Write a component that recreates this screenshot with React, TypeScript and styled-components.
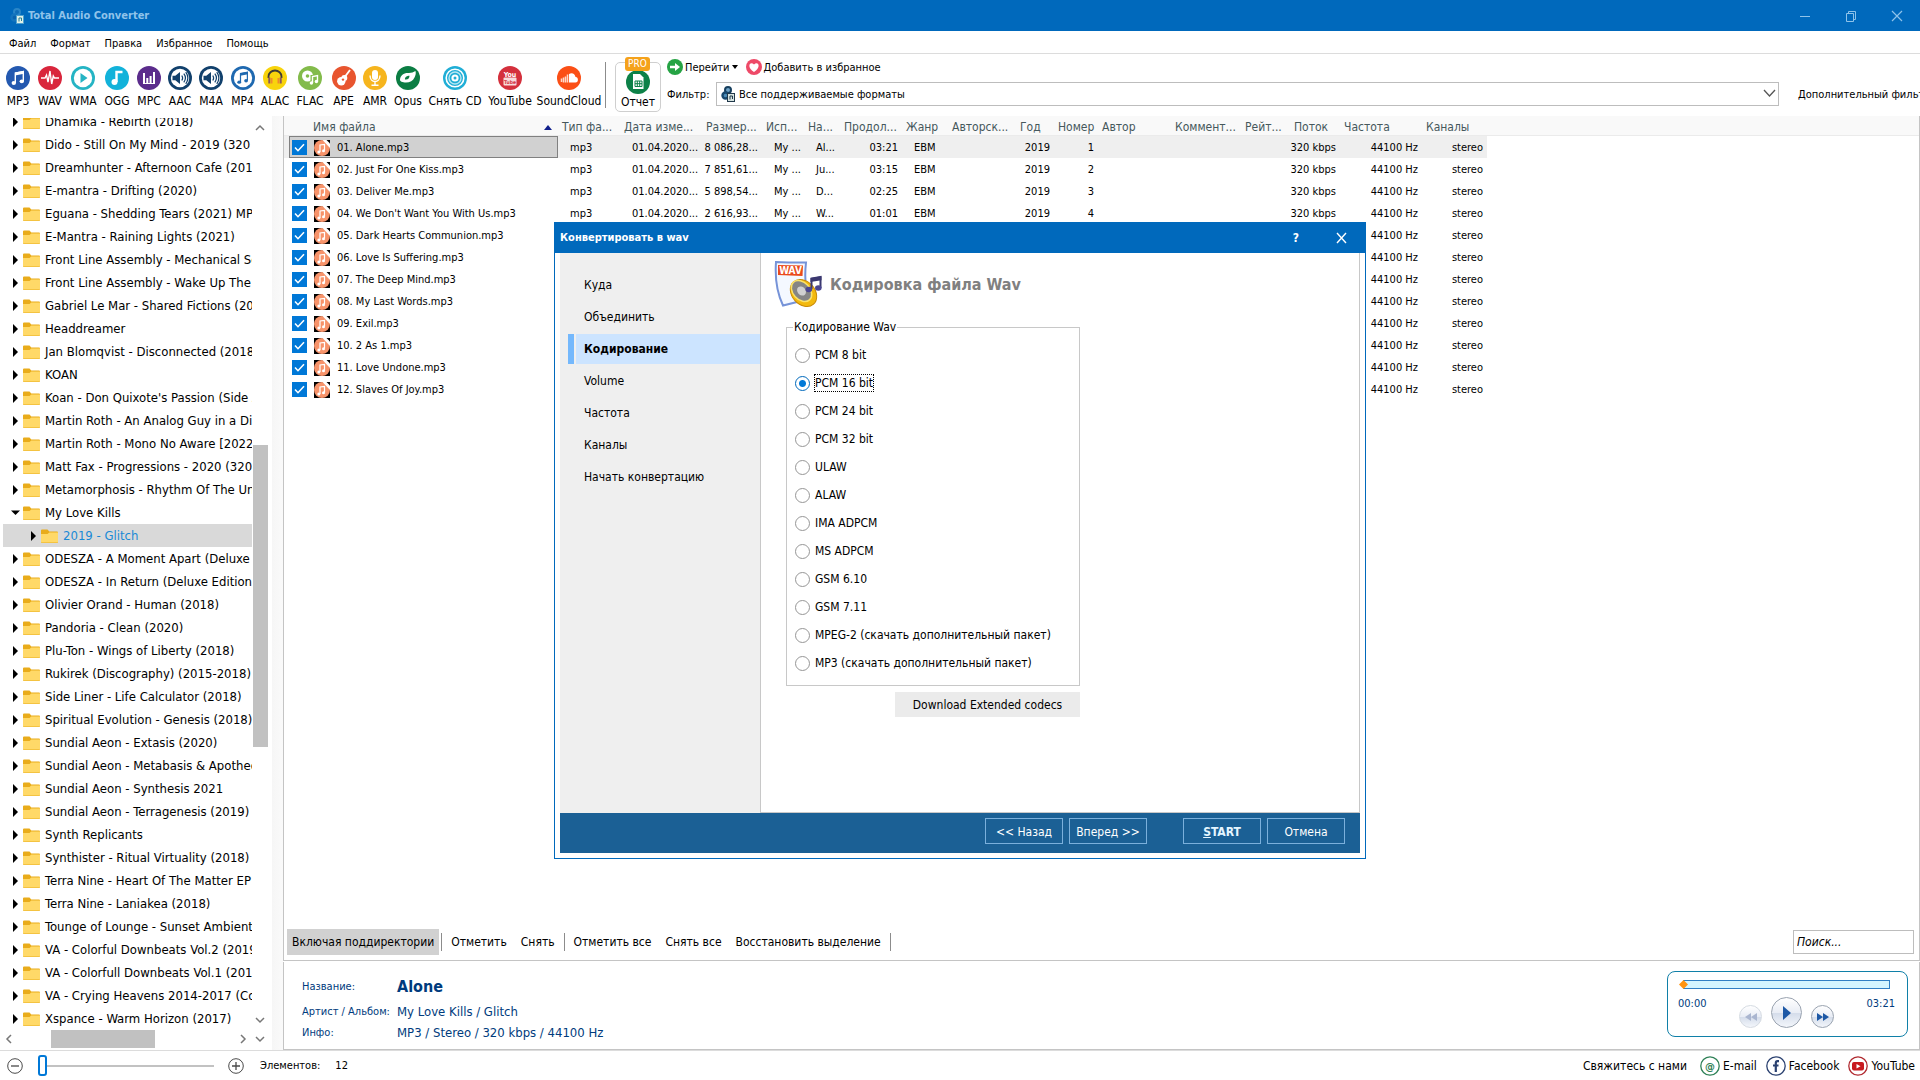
import React from "react";
import styled, { createGlobalStyle } from "styled-components";

const GlobalStyle = createGlobalStyle`
  * { box-sizing: border-box; }
  body {
    margin: 0;
    background: #fff;
    color: #000;
    font-family: "DejaVu Sans Condensed", "DejaVu Sans", "Noto Sans", sans-serif;
    font-size: 12px;
  }
  button, input, select { font: inherit; color: inherit; }
  button {
    margin: 0;
    padding: 0;
    border: 0;
    background: none;
    white-space: nowrap;
    cursor: pointer;
  }
`;

/* ---------- window frame ---------- */

const Window = styled.div`
  display: flex;
  flex-direction: column;
  height: 100vh;
  overflow: hidden;
`;

const TitleBar = styled.header`
  display: flex;
  align-items: center;
  flex: none;
  height: 31px;
  padding: 0 10px;
  gap: 3px;
  background: #0069bc;
  color: #8fc3ea;
`;

const AppTitle = styled.h1`
  flex: 1;
  margin: 0;
  font-size: 11px;
  font-weight: bold;
`;

const CaptionButtons = styled.div`
  display: flex;
  gap: 32px;
  padding-right: 6px;
`;

const CaptionButton = styled.button`
  display: flex;
  width: 14px;
  height: 14px;
`;

const MenuBar = styled.nav`
  display: flex;
  align-items: center;
  flex: none;
  height: 23px;
  padding: 2px 0 0 9px;
  gap: 14px;
  border-bottom: 1px solid #dcdcdc;
`;

const MenuItem = styled.button`
  font-size: 11px;
`;

/* ---------- toolbar ---------- */

const Toolbar = styled.div`
  display: flex;
  flex: none;
  height: 62px;
  overflow: hidden;
`;

const Formats = styled.div`
  display: flex;
  align-items: flex-start;
  padding: 12px 2px 0 1px;
`;

const FormatButton = styled.button<{ $width: number }>`
  display: flex;
  flex-direction: column;
  align-items: center;
  flex: none;
  width: ${(p) => p.$width}px;
  gap: 4px;
  font-size: 12px;
  line-height: 14px;
`;

const Divider = styled.span<{ $height: number }>`
  flex: none;
  width: 1px;
  height: ${(p) => p.$height}px;
  background: #8c8c8c;
`;

const ToolbarDivider = styled(Divider)`
  margin: 8px 9px 0 0;
`;

const ReportButton = styled.button`
  position: relative;
  display: flex;
  flex-direction: column;
  align-items: center;
  flex: none;
  width: 46px;
  height: 50px;
  margin-top: 8px;
  padding-top: 7px;
  gap: 1px;
  border: 1px solid #cfcfcf;
  border-radius: 5px;
  font-size: 12px;
  line-height: 14px;
`;

const ProBadge = styled.span`
  position: absolute;
  top: -6px;
  left: 9px;
  padding: 0 3px;
  border-radius: 3px;
  background: #f5a21b;
  color: #fff;
  font-size: 10px;
  line-height: 14px;
`;

const ToolbarRight = styled.div`
  display: flex;
  flex-direction: column;
  flex: 1;
  min-width: 0;
  padding: 5px 0 0 6px;
  gap: 7px;
  font-size: 11px;
`;

const Actions = styled.div`
  display: flex;
  height: 16px;
  gap: 8px;
`;

const ActionButton = styled.button`
  display: flex;
  align-items: center;
  gap: 2px;
  font-size: 11px;
`;

const FilterRow = styled.div`
  display: flex;
  align-items: center;
`;

const FilterLabel = styled.label`
  width: 49px;
  flex: none;
`;

const FilterBox = styled.div`
  position: relative;
  flex: 1;
`;

const FilterSelect = styled.select`
  display: block;
  width: 100%;
  height: 24px;
  padding: 0 22px;
  border: 1px solid #bdbdbd;
  border-radius: 0;
  background: #fff;
  appearance: none;
`;

const FilterIcon = styled.span`
  position: absolute;
  top: 4px;
  left: 5px;
  display: flex;
  pointer-events: none;
`;

const FilterArrow = styled(FilterIcon)`
  top: 7px;
  left: auto;
  right: 3px;
`;

const ExtraFilter = styled.button`
  flex: none;
  width: 141px;
  padding-left: 19px;
  overflow: hidden;
  text-align: left;
  font-size: 11px;
`;

/* ---------- folder tree ---------- */

const Body = styled.div`
  display: flex;
  flex: 1;
  min-height: 0;
`;

const Sidebar = styled.aside`
  display: flex;
  flex-direction: column;
  flex: none;
  width: 272px;
  padding: 2px 4px 2px 3px;
`;

const TreeArea = styled.div`
  display: flex;
  flex: 1;
  min-height: 0;
`;

const Tree = styled.ul`
  display: flex;
  flex-direction: column;
  justify-content: flex-end;
  flex: 1;
  min-width: 0;
  margin: 0;
  padding: 0;
  overflow: hidden;
  list-style: none;
`;

const Folder = styled.li<{ $depth: number; $selected: boolean }>`
  display: flex;
  align-items: center;
  flex: none;
  height: 23px;
  padding-left: ${(p) => 8 + p.$depth * 18}px;
  gap: 3px;
  overflow: hidden;
  background: ${(p) => (p.$selected ? "#d9d9d9" : "transparent")};
  color: ${(p) => (p.$selected ? "#1a8ad6" : "#000")};
  font-size: 13px;
  line-height: 16px;
  white-space: nowrap;
  svg { flex: none; }
`;

const FolderName = styled.span`
  padding-left: 2px;
`;

const VScroll = styled.div`
  display: flex;
  flex-direction: column;
  align-items: center;
  flex: none;
  width: 16px;
  padding: 4px 0;
`;

const Spacer = styled.span<{ $grow: number }>`
  flex: ${(p) => p.$grow} 1 0;
`;

const VThumb = styled.span`
  flex: 302 1 0;
  width: 15px;
  background: #c1c1c1;
`;

const HScroll = styled.div`
  display: flex;
  align-items: center;
  flex: none;
  height: 18px;
  padding-right: 2px;
`;

const HTrack = styled.div`
  display: flex;
  flex: 1;
  height: 18px;
  padding: 0 82px 0 36px;
`;

const HThumb = styled.span`
  flex: 1;
  background: #c1c1c1;
`;

const HGap = styled.span`
  width: 5px;
`;

const Splitter = styled.div`
  flex: none;
  width: 11px;
  background: linear-gradient(90deg, #f6f6f6, #fafafa);
`;

/* ---------- file list ---------- */

const Main = styled.main`
  display: flex;
  flex-direction: column;
  flex: 1;
  min-width: 0;
`;

const ListPanel = styled.section`
  display: flex;
  flex-direction: column;
  flex: 1;
  min-height: 0;
  border: 1px solid #c4c4c4;
  border-top: 0;
`;

const ListScroller = styled.div`
  flex: 1;
  min-height: 0;
  overflow: hidden;
  background: linear-gradient(#f9f9f9 19px, #ebebeb 19px, #ebebeb 20px, transparent 20px);
`;

const FileTable = styled.table`
  width: 1203px;
  border-collapse: collapse;
  table-layout: fixed;
  font-size: 11px;
  line-height: 14px;
  white-space: nowrap;
`;

const HeadCell = styled.th`
  height: 20px;
  padding: 2px 0 0 4px;
  color: #46585c;
  font-size: 12px;
  font-weight: normal;
  text-align: left;
`;

const NameHead = styled(HeadCell)`
  padding-left: 29px;
`;

const SortHead = styled.div`
  display: flex;
  align-items: center;
  justify-content: space-between;
  padding-right: 6px;
`;

const FileRow = styled.tr<{ $active: boolean }>`
  height: 22px;
  background: ${(p) => (p.$active ? "#efefef" : "transparent")};
`;

const Cell = styled.td<{ $right?: boolean }>`
  padding: ${(p) => (p.$right ? "1px 4px 0 0" : "1px 0 0 12px")};
  text-align: ${(p) => (p.$right ? "right" : "left")};
`;

const NameCell = styled.td`
  padding: 0 0 0 5px;
`;

const NameBox = styled.label<{ $active: boolean }>`
  display: flex;
  align-items: center;
  height: 22px;
  padding: 1px 0 0 2px;
  gap: 7px;
  border: 1px solid ${(p) => (p.$active ? "#808080" : "transparent")};
  background: ${(p) => (p.$active ? "#d1d1d1" : "transparent")};
`;

const Tick = styled.input`
  flex: none;
  width: 15px;
  height: 15px;
  margin: 0;
  border: 1px solid #0078d7;
  background: #0078d7;
  appearance: none;
  &:checked {
    background: #0078d7 url("data:image/svg+xml,%3Csvg xmlns='http://www.w3.org/2000/svg' viewBox='0 0 13 13'%3E%3Cpath d='M2 6.5l3 3.2 6-6.4' fill='none' stroke='white' stroke-width='1.6'/%3E%3C/svg%3E") center / 13px 13px no-repeat;
  }
`;

const SelectBar = styled.div`
  display: flex;
  align-items: center;
  flex: none;
  height: 38px;
  padding: 1px 5px 0 3px;
`;

const SelectButton = styled.button<{ $active?: boolean }>`
  height: 26px;
  padding: 1px ${(p) => (p.$active ? 5 : 7)}px 0;
  background: ${(p) => (p.$active ? "#d1d1d1" : "transparent")};
`;

const BarDivider = styled(Divider)`
  margin: 0 2px;
`;

const Search = styled.input`
  width: 121px;
  height: 24px;
  margin-left: auto;
  padding: 0 3px;
  border: 1px solid #bdbdbd;
  font-style: italic;
  &::placeholder { color: #000; opacity: 1; }
`;

/* ---------- track info and player ---------- */

const InfoPanel = styled.section`
  display: flex;
  justify-content: space-between;
  flex: none;
  height: 88px;
  margin-top: 1px;
  padding: 9px 11px 0 18px;
  border: 1px solid #c4c4c4;
  border-top: 0;
  color: #003b7d;
`;

const TrackInfo = styled.dl`
  display: grid;
  grid-template-columns: 95px auto;
  grid-template-rows: 30px 20px 22px;
  align-items: center;
  margin: 0;
  dt { font-size: 11px; white-space: nowrap; }
  dd { margin: 0; font-size: 13px; }
`;

const TrackTitle = styled.dd`
  && { font-size: 16px; font-weight: bold; }
`;

const Player = styled.div`
  display: flex;
  flex-direction: column;
  width: 241px;
  height: 66px;
  padding: 8px 12px 0 10px;
  border: 1px solid #1080a8;
  border-radius: 8px;
`;

const Seek = styled.input`
  height: 9px;
  margin: 0 5px;
  border: 1px solid #2f7fc4;
  background: #d3f5ff;
  appearance: none;
  &::-webkit-slider-thumb {
    width: 9px;
    height: 9px;
    margin-left: -5px;
    background: #ff9410;
    appearance: none;
    clip-path: polygon(50% 0, 100% 50%, 50% 100%, 0 50%);
  }
`;

const PlayerRow = styled.div`
  display: flex;
  justify-content: space-between;
  padding-top: 8px;
  font-size: 11px;
`;

const PlayerButtons = styled.div`
  display: flex;
  align-items: flex-end;
  gap: 9px;
`;

const RoundButton = styled.button<{ $size: number; $dim?: boolean }>`
  display: flex;
  align-items: center;
  justify-content: center;
  width: ${(p) => p.$size}px;
  height: ${(p) => p.$size}px;
  border: 1px solid ${(p) => (p.$dim ? "#d5dbe2" : "#9aa3b0")};
  border-radius: 50%;
  background: linear-gradient(#fff, #e9edf5 50%, #d4dcea 52%, #f3f6fb);
  color: ${(p) => (p.$dim ? "#aab6d0" : "#1d58a5")};
`;

/* ---------- status bar ---------- */

const StatusBar = styled.footer`
  display: flex;
  align-items: center;
  flex: none;
  height: 30px;
  padding: 0 5px 0 7px;
  border-top: 1px solid #dcdcdc;
`;

const IconButton = styled.button`
  display: flex;
`;

const Zoom = styled.input`
  width: 176px;
  height: 22px;
  margin: 0 14px 0 15px;
  background: linear-gradient(#c2c2c2, #c2c2c2) center / 100% 2px no-repeat;
  appearance: none;
  &::-webkit-slider-thumb {
    width: 9px;
    height: 21px;
    border: 2px solid #0078d7;
    border-radius: 3px;
    background: #fff;
    appearance: none;
  }
`;

const Count = styled.span`
  display: flex;
  gap: 15px;
  padding-left: 16px;
  font-size: 11px;
`;

const Contacts = styled.div`
  display: flex;
  align-items: center;
  margin-left: auto;
  gap: 9px;
`;

const ContactLabel = styled.span`
  padding-right: 4px;
`;

const ContactLink = styled.a`
  display: flex;
  align-items: center;
  gap: 3px;
  color: #000;
  text-decoration: none;
`;

/* ---------- convert dialog ---------- */

const Dialog = styled.section`
  position: absolute;
  top: 222px;
  left: 554px;
  display: flex;
  flex-direction: column;
  width: 812px;
  height: 637px;
  padding: 0 5px 5px;
  border: 1px solid #0069bc;
  border-top: 0;
  background: #fff;
`;

const DialogTitle = styled.header`
  display: flex;
  align-items: center;
  flex: none;
  height: 31px;
  margin: 0 -5px;
  padding: 0 16px 0 5px;
  background: #0069bc;
  color: #fff;
  font-weight: bold;
`;

const DialogName = styled.h2`
  flex: 1;
  margin: 0;
  font-size: 11px;
`;

const DialogCaption = styled.div`
  display: flex;
  align-items: center;
  gap: 36px;
`;

const DialogBody = styled.div`
  display: flex;
  flex: 1;
  min-height: 0;
`;

const Steps = styled.nav`
  display: flex;
  flex-direction: column;
  flex: none;
  width: 200px;
  padding: 17px 0 0 8px;
  gap: 2px;
  background: #efefef;
`;

const Step = styled.button<{ $current: boolean }>`
  height: 30px;
  padding-left: 10px;
  border-left: 6px solid ${(p) => (p.$current ? "#74b8fc" : "transparent")};
  background: ${(p) => (p.$current ? "linear-gradient(90deg, #efefef 2px, #cce4ff 2px)" : "none")};
  font-weight: ${(p) => (p.$current ? "bold" : "normal")};
  text-align: left;
`;

const StepPage = styled.div`
  display: flex;
  flex-direction: column;
  align-items: flex-start;
  flex: 1;
  padding: 7px 0 0 13px;
  border: 1px solid #c8c8c8;
  border-top: 0;
`;

const PageHead = styled.div`
  display: flex;
  align-items: center;
  gap: 7px;
  h3 {
    margin: 0;
    color: #808080;
    font-size: 16px;
    font-weight: bold;
  }
`;

const PageBody = styled.div`
  display: flex;
  flex-direction: column;
  align-items: flex-end;
  padding-left: 12px;
`;

const Codecs = styled.fieldset`
  width: 294px;
  margin: 10px 0 6px;
  padding: 5px 8px 8px;
  border: 1px solid #c8c8c8;
  legend {
    margin-left: -2px;
    padding: 0 1px;
    line-height: 18px;
  }
`;

const CodecRow = styled.label`
  display: flex;
  align-items: center;
  height: 28px;
  gap: 4px;
  white-space: nowrap;
`;

const Radio = styled.input`
  flex: none;
  width: 15px;
  height: 15px;
  margin: 0;
  border: 1px solid #969696;
  border-radius: 50%;
  background: #fff;
  appearance: none;
  &:checked {
    border-color: #0069bc;
    background: radial-gradient(#0078d7 3px, #fff 4px);
  }
`;

const CodecName = styled.span<{ $focused: boolean }>`
  border: 1px dotted ${(p) => (p.$focused ? "#000" : "transparent")};
  line-height: 16px;
`;

const DownloadButton = styled.button`
  width: 185px;
  height: 25px;
  background: #ebebeb;
`;

const DialogFooter = styled.footer`
  display: flex;
  align-items: center;
  justify-content: flex-end;
  flex: none;
  height: 40px;
  padding: 0 15px 4px 0;
  gap: 6px;
  background: #1b6095;
`;

const FooterButton = styled.button<{ $primary?: boolean }>`
  width: 78px;
  height: 26px;
  margin-left: ${(p) => (p.$primary ? 30 : 0)}px;
  padding-top: 2px;
  border: 1px solid #7bb0dc;
  color: ${(p) => (p.$primary ? "#e4f5ff" : "#fff")};
  font-weight: ${(p) => (p.$primary ? "bold" : "normal")};
`;

/* ---------- icons ---------- */

function Disc({ color, children, ring }: { color: string; children: React.ReactNode; ring?: boolean }) {
  return (
    <svg width="24" height="24" viewBox="0 0 24 24" fill="none" aria-hidden="true">
      <circle cx="12" cy="12" r="12" fill={color} />
      {ring && <circle cx="12" cy="12" r="9.2" fill="#fff" />}
      {children}
    </svg>
  );
}

const Notes = ({ fill }: { fill: string }) => (
  <g fill={fill}>
    <path d="M9.3 17V7l8-1.500v9.500" fill="none" stroke={fill} strokeWidth="1.400" />
    <path d="M9 6.500l9-1.700v3L9 9.500z" />
    <ellipse cx="7.800" cy="17" rx="2.200" ry="1.900" />
    <ellipse cx="15.800" cy="15.300" rx="2.200" ry="1.900" />
  </g>
);

const Speaker = () => (
  <Disc color="#11406c" ring>
    <path d="M4.500 9.800h2.800L12 6v12l-4.700-3.800H4.500z" fill="#11406c" />
    <path d="M13.800 9.500c1 1.500 1 3.500 0 5M15.800 7.700c2 2.600 2 6 0 8.600M17.800 6.200c2.500 3.500 2.500 8 0 11.600" stroke="#11406c" strokeWidth="1.200" />
  </Disc>
);

const formats: { name: string; width: number; icon: React.ReactNode }[] = [
  { name: "MP3", width: 34, icon: <Disc color="#2459b0"><Notes fill="#fff" /></Disc> },
  { name: "WAV", width: 30, icon: <Disc color="#d9263c"><path d="M3 12h4l1.500-3 1.500 7L12 5l1.700 13 1.600-8 1.200 2H21" stroke="#fff" strokeWidth="1.400" /></Disc> },
  { name: "WMA", width: 36, icon: <Disc color="#25b4c4" ring><path d="M9.500 7v10l7-5z" fill="#25b4c4" /></Disc> },
  { name: "OGG", width: 32, icon: <Disc color="#12b2da"><path d="M11.500 16V6h6" stroke="#fff" strokeWidth="2.400" /><circle cx="9.500" cy="16" r="3" fill="#fff" /></Disc> },
  { name: "MPC", width: 32, icon: <Disc color="#5b2c8c"><path d="M7 18V7M10.300 18v-6M13.600 18v-8M17 18V6" stroke="#fff" strokeWidth="2" /><path d="M6 17.500h12" stroke="#fff" /></Disc> },
  { name: "AAC", width: 30, icon: <Speaker /> },
  { name: "M4A", width: 32, icon: <Speaker /> },
  { name: "MP4", width: 31, icon: <Disc color="#1f69b0" ring><g transform="translate(1.500 1.600) scale(.86)"><Notes fill="#1f69b0" /></g></Disc> },
  { name: "ALAC", width: 34, icon: <Disc color="#f8d40c"><path d="M5.500 12V10.500a6.500 6 0 0 1 13 0V12" stroke="#3d3a36" strokeWidth="1.800" /><path d="M6.300 11.500v6M17.700 11.500v6" stroke="#8a5a60" strokeWidth="2" /><path d="M8.600 12v5.500M15.400 12v5.500" stroke="#ef8a2c" strokeWidth="1.800" /></Disc> },
  { name: "FLAC", width: 36, icon: <Disc color="#83bb4b"><circle cx="9.500" cy="10" r="5.500" fill="#fff" /><circle cx="9.500" cy="10" r="1.800" fill="#83bb4b" /><path d="M12.500 9h8v11h-8z" fill="#83bb4b" /><path d="M14.500 17v-6.500l5-1v6" stroke="#fff" strokeWidth="1.400" /><circle cx="13.400" cy="17" r="1.700" fill="#fff" /><circle cx="18.400" cy="15.500" r="1.700" fill="#fff" /></Disc> },
  { name: "APE", width: 31, icon: <Disc color="#e8552f"><path d="M18 4l-6 8" stroke="#fff" strokeWidth="1.800" /><circle cx="12.300" cy="12" r="3" fill="#fff" /><circle cx="9.300" cy="15.300" r="4.200" fill="#fff" /><circle cx="11" cy="13.600" r="1.200" fill="#e8552f" /></Disc> },
  { name: "AMR", width: 32, icon: <Disc color="#f6b51e"><rect x="9" y="4" width="6" height="10" rx="3" fill="#fff" /><path d="M7 9.500c0 8 10 8 10 0M12 16v3M8.500 19.200h7" stroke="#fff" strokeWidth="1.400" /></Disc> },
  { name: "Opus", width: 34, icon: <Disc color="#0b7d43"><path d="M4 13.500C4.500 9 8 6.500 13 7c2.500 0 4.500-.800 6.500-2 .800 3-.300 5-1 6.500-1.500 3.500-4.500 5-8.500 5-3.500 0-6.300-1-6-3z" fill="#fff" /><path d="M9 13.500c-.500-2.500 2-3.800 4.500-3.800 0 2.500-1.500 4.300-4.500 3.800z" fill="#0b7d43" /></Disc> },
  { name: "Снять CD", width: 60, icon: <Disc color="#20aed6"><circle cx="12" cy="12" r="8.800" stroke="#fff" strokeWidth="1.600" /><circle cx="12" cy="12" r="6" stroke="#b6e6f3" strokeWidth="1.400" /><circle cx="12" cy="12" r="3.600" fill="#fff" /><circle cx="12" cy="12" r="1.500" fill="#20aed6" /></Disc> },
  { name: "YouTube", width: 50, icon: <Disc color="#d4303c"><text x="12" y="10.500" textAnchor="middle" fontSize="7" fontWeight="bold" fill="#fff">You</text><rect x="5.500" y="11.500" width="13" height="8" rx="1" fill="#f6dcdc" /><text x="12" y="17.800" textAnchor="middle" fontSize="5" fontWeight="bold" fill="#d4303c">Tube</text></Disc> },
  { name: "SoundCloud", width: 68, icon: <Disc color="#fb4f16"><path d="M12 16.500V8c3-2 6-.300 6.500 3 3-.200 3.500 5.500 0 5.500z" fill="#fff" /><path d="M10.500 16.500V8.500M8.500 16.500v-6M6.500 16.500v-5M4.500 16v-3.500" stroke="#ffd9ca" strokeWidth="1.500" /></Disc> },
];

const AppIcon = ({ light }: { light?: boolean }) => (
  <svg width="15" height="16" viewBox="0 0 15 16" fill="none" aria-hidden="true">
    <circle cx="7" cy="4" r="3" fill={light ? "#0f6db8" : "#6fa3c8"} stroke={light ? "#2a86c8" : "#173f5e"} strokeWidth="2" />
    <circle cx="4.500" cy="9.500" r="3" fill={light ? "#0a62ad" : "#4c8cb8"} stroke={light ? "#1474bd" : "#17486e"} strokeWidth="2.400" />
    <rect x="6.500" y="7.500" width="7" height="8" fill={light ? "#dff0e8" : "#d6e3e0"} stroke={light ? "#4fa2cf" : "#20384a"} />
    <path d="M9 13.500v-3.500h2.500v3" stroke={light ? "#2a7f90" : "#20384a"} />
  </svg>
);

const FolderIcon = () => (
  <svg width="17" height="16" viewBox="0 0 17 16" aria-hidden="true">
    <path d="M0 2.500a1 1 0 0 1 1-1h5.500l1.800 2H16a1 1 0 0 1 1 1V14a1 1 0 0 1-1 1H1a1 1 0 0 1-1-1z" fill="#e9ac1b" />
    <path d="M0 6h6.500l1.800-1.500H17v9.300a.9.900 0 0 1-1 .800H1a.9.900 0 0 1-1-.800z" fill="#ffd968" />
  </svg>
);

const Expander = ({ open }: { open: boolean }) => (
  <svg width="9" height="12" viewBox="0 0 9 12" aria-hidden="true">
    <path d={open ? "M0 3.500h9L4.500 8z" : "M2 1v10l5-5z"} fill="#000" />
  </svg>
);

const arrows = { up: "M2 8l4-4 4 4", down: "M2 4l4 4 4-4", left: "M8 2L4 6l4 4", right: "M4 2l4 4-4 4" };

const Arrow = ({ dir }: { dir: keyof typeof arrows }) => (
  <svg width="12" height="12" viewBox="0 0 12 12" fill="none" aria-hidden="true">
    <path d={arrows[dir]} stroke="#777" strokeWidth="1.500" />
  </svg>
);

const FileIcon = () => (
  <svg width="16" height="16" viewBox="0 0 16 16" fill="none" aria-hidden="true">
    <path d="M0 0h16v16H0z" fill="#000" />
    <circle cx="8" cy="8" r="8" fill="#f7936a" />
    <path d="M8.500 0h4L16 3.500V8z" fill="#fff" />
    <path d="M6 12V5l4.500-.5v6" stroke="#fff" strokeWidth="1.200" />
    <circle cx="4.800" cy="12" r="1.500" fill="#fff" />
    <circle cx="9.500" cy="10.800" r="1.500" fill="#fff" />
  </svg>
);

const RoundSign = ({ plus }: { plus?: boolean }) => (
  <svg width="16" height="16" viewBox="0 0 16 16" fill="none" stroke="#4a4a4a" aria-hidden="true">
    <circle cx="8" cy="8" r="7.300" />
    <path d={plus ? "M4 8h8M8 4v8" : "M4 8h8"} strokeWidth="1.300" />
  </svg>
);

const WavIcon = () => (
  <svg width="49" height="48" viewBox="0 0 49 48" aria-hidden="true">
    <path d="M2 2C12 2.500 22 2.500 32 2.500 30.500 16 31 28 35 39L9 45.500C3 33 1 16 2 2z" fill="#f4f8ff" stroke="#7693d8" strokeWidth="2" />
    <path d="M4 5l25 .5-.5 10.500L4 15z" fill="#ea4a1c" />
    <text x="16.500" y="14" textAnchor="middle" fontSize="10" fontWeight="bold" fill="#fff">WAV</text>
    <ellipse cx="29.500" cy="33" rx="11.500" ry="15" transform="rotate(-42 29.500 33)" fill="#f3b90e" stroke="#c98a06" />
    <ellipse cx="27.500" cy="31" rx="8.500" ry="12" transform="rotate(-42 27.500 31)" fill="#858585" stroke="#fbe36a" strokeWidth="1.500" />
    <ellipse cx="27.500" cy="31" rx="4" ry="5" transform="rotate(-42 27.500 31)" fill="#d0d0d0" />
    <path d="M37.500 29V18.500l9-1.500v11" fill="none" stroke="#3b3870" strokeWidth="2" />
    <path d="M36.500 18l11-1.700v4l-11 1.700z" fill="#3b3870" />
    <ellipse cx="34.800" cy="29.500" rx="3.300" ry="2.700" fill="#4a4590" />
    <ellipse cx="44.300" cy="28" rx="3.300" ry="2.700" fill="#4a4590" />
  </svg>
);

const Skip = ({ back }: { back?: boolean }) => (
  <svg width="12" height="8" viewBox="0 0 12 8" fill="currentColor" aria-hidden="true">
    <path d={back ? "M6 0v8L0 4zM12 0v8L6 4z" : "M0 0v8l6-4zM6 0v8l6-4z"} />
  </svg>
);

/* ---------- data ---------- */

const folders = [
  "Dhamika - Rebirth (2018)",
  "Dido - Still On My Mind - 2019 (320 kbps)",
  "Dreamhunter - Afternoon Cafe (2017)",
  "E-mantra - Drifting (2020)",
  "Eguana - Shedding Tears (2021) MP3",
  "E-Mantra - Raining Lights (2021)",
  "Front Line Assembly - Mechanical Soul",
  "Front Line Assembly - Wake Up The Coma",
  "Gabriel Le Mar - Shared Fictions (2018)",
  "Headdreamer",
  "Jan Blomqvist - Disconnected (2018)",
  "KOAN",
  "Koan - Don Quixote's Passion (Side A)",
  "Martin Roth - An Analog Guy in a Digital",
  "Martin Roth - Mono No Aware [2022]",
  "Matt Fax - Progressions - 2020 (320)",
  "Metamorphosis - Rhythm Of The Universe",
  "My Love Kills",
  "2019 - Glitch",
  "ODESZA - A Moment Apart (Deluxe Edition)",
  "ODESZA - In Return (Deluxe Edition)",
  "Olivier Orand - Human (2018)",
  "Pandoria - Clean (2020)",
  "Plu-Ton - Wings of Liberty (2018)",
  "Rukirek (Discography) (2015-2018)",
  "Side Liner - Life Calculator (2018)",
  "Spiritual Evolution - Genesis (2018)",
  "Sundial Aeon - Extasis (2020)",
  "Sundial Aeon - Metabasis & Apotheosis",
  "Sundial Aeon - Synthesis 2021",
  "Sundial Aeon - Terragenesis (2019)",
  "Synth Replicants",
  "Synthister - Ritual Virtuality (2018)",
  "Terra Nine - Heart Of The Matter EP",
  "Terra Nine - Laniakea (2018)",
  "Tounge of Lounge - Sunset Ambient",
  "VA - Colorful Downbeats Vol.2 (2019)",
  "VA - Colorfull Downbeats Vol.1 (2018)",
  "VA - Crying Heavens 2014-2017 (Compilation)",
  "Xspance - Warm Horizon (2017)",
];

const columns: [string, number][] = [
  ["Тип фа...", 62],
  ["Дата изме...", 82],
  ["Размер...", 60],
  ["Исп...", 42],
  ["На...", 36],
  ["Продол...", 62],
  ["Жанр", 46],
  ["Авторск...", 68],
  ["Год", 38],
  ["Номер", 44],
  ["Автор", 73],
  ["Коммент...", 70],
  ["Рейт...", 49],
  ["Поток", 50],
  ["Частота", 82],
  ["Каналы", 65],
];

const files = [
  ["01. Alone.mp3", "8 086,28...", "Al...", "03:21"],
  ["02. Just For One Kiss.mp3", "7 851,61...", "Ju...", "03:15"],
  ["03. Deliver Me.mp3", "5 898,54...", "D...", "02:25"],
  ["04. We Don't Want You With Us.mp3", "2 616,93...", "W...", "01:01"],
  ["05. Dark Hearts Communion.mp3", "", "", ""],
  ["06. Love Is Suffering.mp3", "", "", ""],
  ["07. The Deep Mind.mp3", "", "", ""],
  ["08. My Last Words.mp3", "", "", ""],
  ["09. Exil.mp3", "", "", ""],
  ["10. 2 As 1.mp3", "", "", ""],
  ["11. Love Undone.mp3", "", "", ""],
  ["12. Slaves Of Joy.mp3", "", "", ""],
];

const steps = ["Куда", "Объединить", "Кодирование", "Volume", "Частота", "Каналы", "Начать конвертацию"];

const codecs = [
  "PCM 8 bit",
  "PCM 16 bit",
  "PCM 24 bit",
  "PCM 32 bit",
  "ULAW",
  "ALAW",
  "IMA ADPCM",
  "MS ADPCM",
  "GSM 6.10",
  "GSM 7.11",
  "MPEG-2 (скачать дополнительный пакет)",
  "MP3 (скачать дополнительный пакет)",
];

/* ---------- parts ---------- */

function FormatToolbar() {
  return (
    <Toolbar>
      <Formats>
        {formats.map((f) => (
          <FormatButton key={f.name} $width={f.width}>
            {f.icon}
            {f.name}
          </FormatButton>
        ))}
      </Formats>
      <ToolbarDivider $height={46} />
      <ReportButton>
        <ProBadge>PRO</ProBadge>
        <Disc color="#0d8148">
          <path d="M7 4h7l3.500 3.500V19H7z" fill="#fff" />
          <path d="M9 11h7v5.500H9zM9 13.700h7M11.300 11v5.500M13.700 11v5.500" stroke="#0d8148" />
        </Disc>
        Отчет
      </ReportButton>
      <ToolbarRight>
        <Actions>
          <ActionButton>
            <svg width="16" height="16" viewBox="0 0 16 16" aria-hidden="true">
              <circle cx="8" cy="8" r="8" fill="#25a344" />
              <path d="M3 6.700h5V4l5 4-5 4V9.300H3z" fill="#fff" />
            </svg>
            Перейти
            <svg width="6" height="4" viewBox="0 0 6 4" aria-hidden="true"><path d="M0 0h6L3 4z" /></svg>
          </ActionButton>
          <ActionButton>
            <svg width="16" height="16" viewBox="0 0 16 16" aria-hidden="true">
              <circle cx="8" cy="8" r="8" fill="#ee4a68" />
              <path d="M8 13C0 8 4 1.500 8 5.500 12 1.500 16 8 8 13z" fill="#fff" />
            </svg>
            Добавить в избранное
          </ActionButton>
        </Actions>
        <FilterRow>
          <FilterLabel htmlFor="filter">Фильтр:</FilterLabel>
          <FilterBox>
            <FilterSelect id="filter">
              <option>Все поддерживаемые форматы</option>
            </FilterSelect>
            <FilterIcon><AppIcon /></FilterIcon>
            <FilterArrow>
              <svg width="13" height="9" viewBox="0 0 13 9" fill="none" aria-hidden="true"><path d="M1 1l5.500 6L12 1" stroke="#555" strokeWidth="1.300" /></svg>
            </FilterArrow>
          </FilterBox>
          <ExtraFilter>Дополнительный фильтр</ExtraFilter>
        </FilterRow>
      </ToolbarRight>
    </Toolbar>
  );
}

function FolderTree() {
  return (
    <Sidebar>
      <TreeArea>
        <Tree>
          {folders.map((name) => {
            const selected = name === "2019 - Glitch";
            return (
              <Folder key={name} $depth={selected ? 1 : 0} $selected={selected}>
                <Expander open={name === "My Love Kills"} />
                <FolderIcon />
                <FolderName>{name}</FolderName>
              </Folder>
            );
          })}
        </Tree>
        <VScroll>
          <Arrow dir="up" />
          <Spacer $grow={312} />
          <VThumb />
          <Spacer $grow={268} />
          <Arrow dir="down" />
        </VScroll>
      </TreeArea>
      <HScroll>
        <Arrow dir="left" />
        <HTrack><HThumb /></HTrack>
        <Arrow dir="right" />
        <HGap />
        <Arrow dir="down" />
      </HScroll>
    </Sidebar>
  );
}

function FileList() {
  return (
    <ListScroller>
      <FileTable>
        <colgroup>
          <col style={{ width: 274 }} />
          {columns.map(([name, width]) => <col key={name} style={{ width }} />)}
        </colgroup>
        <thead>
          <tr>
            <NameHead>
              <SortHead>
                Имя файла
                <svg width="8" height="5" viewBox="0 0 8 5" aria-hidden="true"><path d="M4 0l4 5H0z" fill="#11208c" /></svg>
              </SortHead>
            </NameHead>
            {columns.map(([name]) => <HeadCell key={name}>{name}</HeadCell>)}
          </tr>
        </thead>
        <tbody>
          {files.map(([name, size, title, length], i) => (
            <FileRow key={name} $active={i === 0}>
              <NameCell>
                <NameBox $active={i === 0}>
                  <Tick type="checkbox" defaultChecked />
                  <FileIcon />
                  {name}
                </NameBox>
              </NameCell>
              <Cell>{length && "mp3"}</Cell>
              <Cell>{length && "01.04.2020..."}</Cell>
              <Cell $right>{size}</Cell>
              <Cell>{length && "My ..."}</Cell>
              <Cell>{title}</Cell>
              <Cell $right>{length}</Cell>
              <Cell>{length && "EBM"}</Cell>
              <Cell />
              <Cell $right>{length && "2019"}</Cell>
              <Cell $right>{length && i + 1}</Cell>
              <Cell />
              <Cell />
              <Cell />
              <Cell $right>{length && "320 kbps"}</Cell>
              <Cell $right>44100 Hz</Cell>
              <Cell $right>stereo</Cell>
            </FileRow>
          ))}
        </tbody>
      </FileTable>
    </ListScroller>
  );
}

function TrackPanel() {
  return (
    <InfoPanel>
      <TrackInfo>
        <dt>Название:</dt>
        <TrackTitle>Alone</TrackTitle>
        <dt>Артист / Альбом:</dt>
        <dd>My Love Kills / Glitch</dd>
        <dt>Инфо:</dt>
        <dd>MP3 / Stereo / 320 kbps / 44100 Hz</dd>
      </TrackInfo>
      <Player>
        <Seek type="range" defaultValue={0} aria-label="Позиция" />
        <PlayerRow>
          <span>00:00</span>
          <PlayerButtons>
            <RoundButton $size={23} $dim aria-label="Назад"><Skip back /></RoundButton>
            <RoundButton $size={31} aria-label="Играть">
              <svg width="9" height="14" viewBox="0 0 9 14" fill="currentColor" aria-hidden="true"><path d="M1 0v14l8-7z" /></svg>
            </RoundButton>
            <RoundButton $size={23} aria-label="Вперед"><Skip /></RoundButton>
          </PlayerButtons>
          <span>03:21</span>
        </PlayerRow>
      </Player>
    </InfoPanel>
  );
}

function ConvertDialog() {
  return (
    <Dialog role="dialog" aria-label="Конвертировать в wav">
      <DialogTitle>
        <DialogName>Конвертировать в wav</DialogName>
        <DialogCaption>
          <button>?</button>
          <CaptionButton aria-label="Закрыть">
            <svg width="14" height="14" viewBox="0 0 14 14" stroke="#fff" strokeWidth="1.400" aria-hidden="true"><path d="M2 2l9 10M11 2L2 12" /></svg>
          </CaptionButton>
        </DialogCaption>
      </DialogTitle>
      <DialogBody>
        <Steps>
          {steps.map((s) => <Step key={s} $current={s === "Кодирование"}>{s}</Step>)}
        </Steps>
        <StepPage>
          <PageHead>
            <WavIcon />
            <h3>Кодировка файла Wav</h3>
          </PageHead>
          <PageBody>
            <Codecs>
              <legend>Кодирование Wav</legend>
              {codecs.map((c) => (
                <CodecRow key={c}>
                  <Radio type="radio" name="codec" defaultChecked={c === "PCM 16 bit"} />
                  <CodecName $focused={c === "PCM 16 bit"}>{c}</CodecName>
                </CodecRow>
              ))}
            </Codecs>
            <DownloadButton>Download Extended codecs</DownloadButton>
          </PageBody>
        </StepPage>
      </DialogBody>
      <DialogFooter>
        <FooterButton>&lt;&lt; Назад</FooterButton>
        <FooterButton>Вперед &gt;&gt;</FooterButton>
        <FooterButton $primary><u>S</u>TART</FooterButton>
        <FooterButton>Отмена</FooterButton>
      </DialogFooter>
    </Dialog>
  );
}

export default function App() {
  return (
    <Window>
      <GlobalStyle />
      <TitleBar>
        <AppIcon light />
        <AppTitle>Total Audio Converter</AppTitle>
        <CaptionButtons>
          <CaptionButton aria-label="Свернуть">
            <svg width="14" height="14" viewBox="0 0 14 14" stroke="#8fc3ea" aria-hidden="true"><path d="M2 7.500h10" /></svg>
          </CaptionButton>
          <CaptionButton aria-label="Восстановить">
            <svg width="14" height="14" viewBox="0 0 14 14" fill="none" stroke="#8fc3ea" aria-hidden="true"><path d="M2.500 4.500h7v8h-7zM4.500 4.500v-2h7v8h-2" /></svg>
          </CaptionButton>
          <CaptionButton aria-label="Закрыть">
            <svg width="14" height="14" viewBox="0 0 14 14" stroke="#8fc3ea" strokeWidth="1.200" aria-hidden="true"><path d="M2 2l10 10M12 2L2 12" /></svg>
          </CaptionButton>
        </CaptionButtons>
      </TitleBar>
      <MenuBar>
        {["Файл", "Формат", "Правка", "Избранное", "Помощь"].map((m) => <MenuItem key={m}>{m}</MenuItem>)}
      </MenuBar>
      <FormatToolbar />
      <Body>
        <FolderTree />
        <Splitter />
        <Main>
          <ListPanel>
            <FileList />
            <SelectBar>
              <SelectButton $active>Включая поддиректории</SelectButton>
              <BarDivider $height={18} />
              <SelectButton>Отметить</SelectButton>
              <SelectButton>Снять</SelectButton>
              <BarDivider $height={18} />
              <SelectButton>Отметить все</SelectButton>
              <SelectButton>Снять все</SelectButton>
              <SelectButton>Восстановить выделение</SelectButton>
              <BarDivider $height={18} />
              <Search placeholder="Поиск..." aria-label="Поиск" />
            </SelectBar>
          </ListPanel>
          <TrackPanel />
        </Main>
      </Body>
      <StatusBar>
        <IconButton aria-label="Уменьшить"><RoundSign /></IconButton>
        <Zoom type="range" defaultValue={0} aria-label="Масштаб" />
        <IconButton aria-label="Увеличить"><RoundSign plus /></IconButton>
        <Count><span>Элементов:</span><span>12</span></Count>
        <Contacts>
          <ContactLabel>Свяжитесь с нами</ContactLabel>
          <ContactLink href="#email">
            <svg width="20" height="20" viewBox="0 0 20 20" fill="none" aria-hidden="true">
              <circle cx="10" cy="10" r="9.200" stroke="#2f8157" strokeWidth="1.300" />
              <text x="10" y="14" textAnchor="middle" fontSize="11" fontWeight="bold" fill="#2f8157">@</text>
            </svg>
            E-mail
          </ContactLink>
          <ContactLink href="#facebook">
            <svg width="20" height="20" viewBox="0 0 20 20" fill="none" aria-hidden="true">
              <circle cx="10" cy="10" r="9.200" stroke="#2b4170" strokeWidth="1.300" />
              <path d="M13 5.200h-1.500c-1.500 0-1.700 1-1.700 2V16M7 9.500h5.500" stroke="#2b4170" strokeWidth="2.200" />
            </svg>
            Facebook
          </ContactLink>
          <ContactLink href="#youtube">
            <svg width="20" height="20" viewBox="0 0 20 20" fill="none" aria-hidden="true">
              <circle cx="10" cy="10" r="9.200" stroke="#b02a30" strokeWidth="1.300" />
              <rect x="4" y="6" width="12" height="8.500" rx="2" fill="#c8191f" />
              <path d="M8.500 8v4.500l4-2.200z" fill="#fff" />
            </svg>
            YouTube
          </ContactLink>
        </Contacts>
      </StatusBar>
      <ConvertDialog />
    </Window>
  );
}
